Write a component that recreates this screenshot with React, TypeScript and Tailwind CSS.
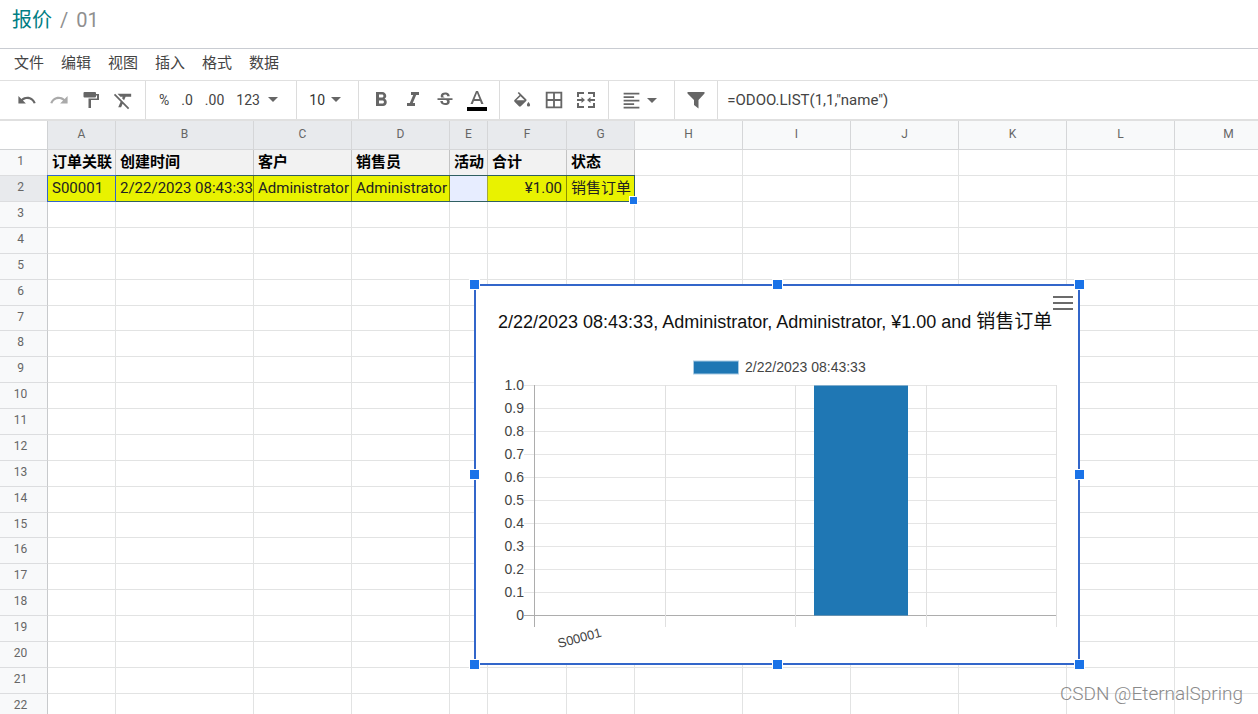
import type { ReactNode } from "react";
import {
  MdBorderAll,
  MdFormatAlignLeft,
  MdFormatBold,
  MdFormatClear,
  MdFormatItalic,
  MdStrikethroughS,
} from "react-icons/md";

const MENUS = ["文件", "编辑", "视图", "插入", "格式", "数据"];

const COLUMNS = [
  { name: "A", width: 68 },
  { name: "B", width: 138 },
  { name: "C", width: 98 },
  { name: "D", width: 98 },
  { name: "E", width: 38 },
  { name: "F", width: 79 },
  { name: "G", width: 68 },
  { name: "H", width: 108 },
  { name: "I", width: 108 },
  { name: "J", width: 108 },
  { name: "K", width: 108 },
  { name: "L", width: 108 },
  { name: "M", width: 108 },
];

const SELECTED_COLS = 7;
const ROWS = Array.from({ length: 22 }, (_, i) => i + 1);

const HEADERS = ["订单关联", "创建时间", "客户", "销售员", "活动", "合计", "状态"];
const VALUES = ["S00001", "2/22/2023 08:43:33", "Administrator", "Administrator", "", "¥1.00", "销售订单"];

const TABLE_WIDTH = COLUMNS.reduce((sum, c) => sum + c.width, 48);

// one row in eight is a pixel shorter
const rowHeight = (row: number) => (row % 8 === 7 ? 25 : 26);

function Caret() {
  return (
    <svg width="10" height="5" viewBox="0 0 10 5" className="pointer-events-none shrink-0">
      <path d="M0 0h10L5 5z" fill="#666" />
    </svg>
  );
}

function Group({ children, className = "px-[6px]" }: { children: ReactNode; className?: string }) {
  return <div className={`flex h-full items-center border-r border-[#dcdcdc] ${className}`}>{children}</div>;
}

function Tool({ label, children }: { label: string; children: ReactNode }) {
  return (
    <button aria-label={label} className="flex h-8 w-8 items-center justify-center">
      {children}
    </button>
  );
}

function Toolbar() {
  return (
    <div className="flex h-10 shrink-0 items-center border-b-2 border-[#e0e0e0] text-[#666]">
      <Group className="pl-[11px] pr-[6px]">
        <Tool label="Undo">
          <svg width="18" height="18" viewBox="0 0 18 18" fill="#666">
            <path d="M9.3 5.8c-2.3 0-4.3.8-5.9 2.2L.4 5.1v7.5h7.5L4.9 9.6c1.1-1 2.7-1.6 4.4-1.6 3 0 5.6 1.9 6.4 4.6l2-.6C16.5 8.4 13.2 5.800 9.3 5.800z" />
          </svg>
        </Tool>
        <Tool label="Redo">
          <svg width="18" height="18" viewBox="0 0 18 18" fill="#aaa">
            <path d="M8.7 5.8c2.3 0 4.3.8 5.9 2.2l3-2.9v7.500h-7.500l3-3C12 8.600 10.400 8 8.700 8c-3 0-5.600 1.900-6.400 4.600l-2-.6C1.500 8.400 4.800 5.800 8.700 5.800z" />
          </svg>
        </Tool>
        <Tool label="Paint format">
          <svg width="16" height="18" viewBox="0 0 16 18" fill="#666">
            <path d="M1.500 1h10.500a1 1 0 0 1 1 1v1h3v6H8v8H5.500V7.500h8.500v-3h-1v1a1 1 0 0 1-1 1H1.500a1 1 0 0 1-1-1V2a1 1 0 0 1 1-1z" />
          </svg>
        </Tool>
        <Tool label="Clear format">
          <MdFormatClear size={23} />
        </Tool>
      </Group>
      <Group className="gap-3 pb-px pl-[13px] pr-[18px] text-sm text-[#444]">
        <button>%</button>
        <button>.0</button>
        <button>.00</button>
        <label className="flex items-center">
          <select aria-label="Number format" className="w-8 appearance-none outline-none">
            <option>123</option>
          </select>
          <Caret />
        </label>
      </Group>
      <Group className="pb-px pl-3 pr-[17px] text-sm text-[#333]">
        <label className="flex items-center">
          <select aria-label="Font size" className="w-[22px] appearance-none outline-none">
            <option>10</option>
          </select>
          <Caret />
        </label>
      </Group>
      <Group>
        <Tool label="Bold">
          <MdFormatBold size={24} />
        </Tool>
        <Tool label="Italic">
          <MdFormatItalic size={24} />
        </Tool>
        <Tool label="Strikethrough">
          <MdStrikethroughS size={20} />
        </Tool>
        <Tool label="Text color">
          <svg width="20" height="22" viewBox="0 0 20 22">
            <path d="M9 2 3.500 15h2.300l1.100-3h6.200l1.100 3h2.300L11 2H9zm-1.400 8L10 4l2.400 6H7.600z" fill="#666" />
            <path d="M0 18h20v4H0z" fill="#000" />
          </svg>
        </Tool>
      </Group>
      <Group>
        <Tool label="Fill color">
          <svg width="18" height="18" viewBox="0 0 18 18" fill="#666">
            <path d="m13.200 8.200-7.300-7.300L4.700 2.100 6.600 4 1.500 9.100a1.200 1.200 0 0 0 0 1.700l4.500 4.500c.3.300.6.400.9.400s.6-.1.900-.4l5.400-5.400c.5-.5.500-1.200 0-1.700zM3.400 9.300 7.500 5.200l4.100 4.100H3.400zM15.500 11s-1.600 1.800-1.600 2.900a1.600 1.600 0 0 0 3.200 0C17.100 12.800 15.500 11 15.500 11z" />
          </svg>
        </Tool>
        <Tool label="Borders">
          <MdBorderAll size={22} />
        </Tool>
        <Tool label="Merge cells">
          <svg width="18" height="16" viewBox="0 0 18 16" fill="none" stroke="#666" strokeWidth="2">
            <path d="M1 5V1h6M11 1h6v4M1 11v4h6M11 15h6v-4" />
            <path d="M0 8h6M12 8h6" />
            <path d="M4.500 5v6L8 8zM13.500 5v6L10 8z" fill="#666" stroke="none" />
          </svg>
        </Tool>
      </Group>
      <Group className="pl-[6px] pr-[17px]">
        <button aria-label="Horizontal align" className="flex h-8 items-center">
          <span className="flex w-8 justify-center">
            <MdFormatAlignLeft size={21} />
          </span>
          <Caret />
        </button>
      </Group>
      <Group className="px-[5px]">
        <Tool label="Filter">
          <svg width="18" height="18" viewBox="0 0 18 18" fill="#666">
            <path d="M.5 1h17v1.500L11.500 9v8.500L7 14V9L.5 2.500z" />
          </svg>
        </Tool>
      </Group>
      <input
        aria-label="Formula"
        defaultValue={'=ODOO.LIST(1,1,"name")'}
        className="h-full min-w-0 flex-1 px-[9px] text-[15px] text-[#444] outline-none"
      />
    </div>
  );
}

function cellClass(row: number, col: number) {
  if (col >= SELECTED_COLS || row > 2) return "border-[#e2e3e3]";
  if (row === 1) return "border-r-[#c4c4c4] border-b-[#e2e3e3] bg-[#f2f2f2] font-bold text-black";
  if (col === 4) return "border-r-[#a4a83c] border-b-[#e2e3e3] bg-[#e7edff]";
  return "border-r-[#8d9100] border-b-[#e2e3e3] bg-[#e9f200] text-[#222]";
}

function Grid() {
  return (
    <table className="table-fixed border-separate border-spacing-0" style={{ width: TABLE_WIDTH }}>
      <colgroup>
        <col style={{ width: 48 }} />
        {COLUMNS.map((c) => (
          <col key={c.name} style={{ width: c.width }} />
        ))}
      </colgroup>
      <thead>
        <tr className="h-[29px]">
          <td className="border-r border-b border-[#d0d2d4] p-0" />
          {COLUMNS.map((c, i) => (
            <th
              key={c.name}
              scope="col"
              className={`border-r border-b border-[#d5d6d8] p-0 pb-[2px] text-xs leading-4 font-normal text-[#666] ${
                i < SELECTED_COLS ? "bg-[#e8eaed]" : "bg-[#f8f9fa]"
              }`}
            >
              {c.name}
            </th>
          ))}
        </tr>
      </thead>
      <tbody>
        {ROWS.map((row) => (
          <tr key={row} style={{ height: rowHeight(row) }}>
            <th
              scope="row"
              className={`border-r border-b border-r-[#c8cacc] border-b-[#dcdddf] p-0 pr-[6px] pb-[3px] text-xs leading-4 font-normal text-[#666] ${
                row === 2 ? "bg-[#e8eaed]" : "bg-[#f8f9fa]"
              }`}
            >
              {row}
            </th>
            {COLUMNS.map((c, col) => (
              <td
                key={c.name}
                className={`overflow-hidden border-r border-b p-0 px-1 pb-[2px] text-[15px] leading-5 whitespace-nowrap ${
                  row === 2 && col === 5 ? "text-right" : "text-left"
                } ${cellClass(row, col)}`}
              >
                {row === 1 && HEADERS[col]}
                {row === 2 && VALUES[col]}
              </td>
            ))}
          </tr>
        ))}
      </tbody>
    </table>
  );
}

const TICKS = ["1.0", "0.9", "0.8", "0.7", "0.6", "0.5", "0.4", "0.3", "0.2", "0.1", "0"];
const GRID_X = [189.5, 319.5, 450.5, 580.5];

const HANDLES = [
  "-left-[6px] -top-[6px]",
  "left-[297px] -top-[6px]",
  "-right-[6px] -top-[6px]",
  "-left-[6px] top-[184px]",
  "-right-[6px] top-[184px]",
  "-left-[6px] -bottom-[6px]",
  "left-[297px] -bottom-[6px]",
  "-right-[6px] -bottom-[6px]",
];

function Chart() {
  return (
    <div className="absolute left-[474px] top-[163px] h-[381px] w-[606px] border-2 border-[#3266ca] bg-white">
      <svg width="602" height="377" viewBox="0 0 602 377" fontFamily="'Liberation Sans', 'Noto Sans CJK SC', sans-serif">
        <text x="22" y="42" fontSize="18" fill="#111">
          2/22/2023 08:43:33, Administrator, Administrator, ¥1.00 and <tspan fontSize="19">销售订单</tspan>
        </text>
        <rect x="217.5" y="75" width="45" height="13" fill="#1f77b4" stroke="#a9cbe3" />
        <text x="269" y="86" fontSize="14" fill="#444">
          2/22/2023 08:43:33
        </text>
        {TICKS.map((t, i) => (
          <g key={t}>
            <line x1="48" x2="581" y1={99.5 + i * 23} y2={99.5 + i * 23} stroke={t === "0" ? "#adadad" : "#e5e5e5"} />
            <text x="48" y={104 + i * 23} fontSize="14" fill="#444" textAnchor="end">
              {t}
            </text>
          </g>
        ))}
        <line x1="58.5" x2="58.5" y1="99" y2="341" stroke="#adadad" />
        {GRID_X.map((x) => (
          <line key={x} x1={x} x2={x} y1="99" y2="341" stroke="#e0e0e0" />
        ))}
        <rect x="338" y="99.5" width="94" height="230" fill="#1f77b4" />
        <text fontSize="13" fill="#444" transform="translate(83 362) rotate(-15)">
          S00001
        </text>
      </svg>
      <button aria-label="Chart menu" className="absolute right-[5px] top-[10px] flex w-5 flex-col gap-1">
        <span className="h-[2px] w-full bg-[#6b6b6b]" />
        <span className="h-[2px] w-full bg-[#6b6b6b]" />
        <span className="h-[2px] w-full bg-[#6b6b6b]" />
      </button>
      {HANDLES.map((pos) => (
        <span key={pos} className={`absolute h-[9px] w-[9px] bg-[#1a73e8] outline outline-white ${pos}`} />
      ))}
    </div>
  );
}

export default function App() {
  return (
    <div className="relative flex h-screen flex-col overflow-hidden bg-white font-[Roboto,'Noto_Sans_CJK_SC',sans-serif]">
      <nav className="flex h-[49px] shrink-0 items-start gap-2 border-b border-[#c9ccd2] px-3 pt-[6px] text-xl leading-7">
        <a href="#" className="text-[#017e84]">
          报价
        </a>
        <span className="text-[#8f8f8f]">/</span>
        <span className="text-[#8f8f8f]">01</span>
      </nav>
      <div className="flex h-8 shrink-0 items-center gap-[17px] border-b border-[#e0e0e0] px-[14px] pb-[2px] text-[15px] text-[#444]">
        {MENUS.map((m) => (
          <button key={m}>{m}</button>
        ))}
      </div>
      <Toolbar />
      <main className="relative min-h-0 flex-1 overflow-hidden">
        <Grid />
        {/* selected range with its active cell and fill handle */}
        <div className="pointer-events-none absolute left-[47px] top-[54px] h-[27px] w-[588px] border border-[#2f5f62]">
          <div className="-ml-px -mt-px h-[27px] w-[69px] border border-[#3266ca]" />
          <span className="absolute -bottom-[3px] -right-[3px] h-[7px] w-[7px] bg-[#1a73e8] outline outline-white" />
        </div>
        <Chart />
      </main>
      <div className="absolute bottom-[6px] right-[15px] text-[19px] leading-7 font-light text-[#8a8a8a]">
        CSDN @EternalSpring
      </div>
    </div>
  );
}
